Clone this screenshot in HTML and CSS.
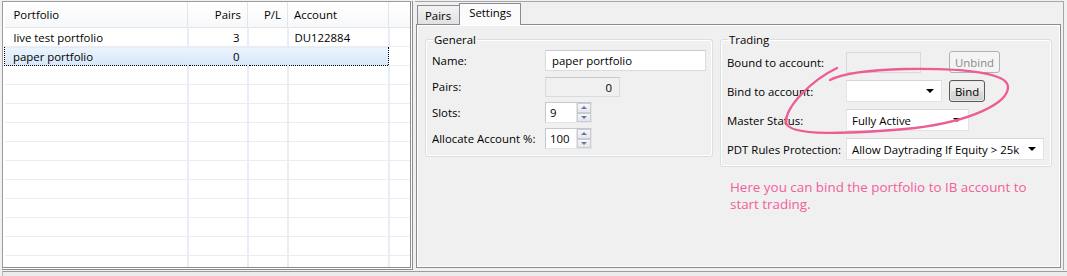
FILE: index.html
```html
<!DOCTYPE html>
<html lang="en">
<head>
    <meta charset="UTF-8">
    <title>Portfolio Settings</title>
    <link rel="stylesheet" href="styles.css">
</head>
<body>
    <div class="window">
        <div class="main">
            <div class="list-pane">
                <table class="grid">
                    <colgroup>
                        <col class="c-name"><col class="c-pairs"><col class="c-pl"><col class="c-acct"><col>
                    </colgroup>
                    <thead>
                        <tr><th class="left">Portfolio</th><th class="num">Pairs</th><th class="num">P/L</th><th class="left">Account</th><th></th></tr>
                    </thead>
                    <tbody>
                        <tr><td>live test portfolio</td><td class="num">3</td><td></td><td>DU122884</td><td></td></tr>
                        <tr class="selected"><td>paper portfolio</td><td class="num">0</td><td></td><td></td><td class="blank"></td></tr>
                        <tr><td></td><td></td><td></td><td></td><td></td></tr>
                        <tr><td></td><td></td><td></td><td></td><td></td></tr>
                        <tr><td></td><td></td><td></td><td></td><td></td></tr>
                        <tr><td></td><td></td><td></td><td></td><td></td></tr>
                        <tr><td></td><td></td><td></td><td></td><td></td></tr>
                        <tr><td></td><td></td><td></td><td></td><td></td></tr>
                        <tr><td></td><td></td><td></td><td></td><td></td></tr>
                        <tr><td></td><td></td><td></td><td></td><td></td></tr>
                        <tr><td></td><td></td><td></td><td></td><td></td></tr>
                        <tr><td></td><td></td><td></td><td></td><td></td></tr>
                        <tr><td></td><td></td><td></td><td></td><td></td></tr>
                    </tbody>
                </table>
            </div>
            <div class="tab-pane">
                <div class="tabs">
                    <div class="tab">Pairs</div>
                    <div class="tab active">Settings</div>
                </div>
                <div class="tab-body">
                    <fieldset class="group general">
                        <legend>General</legend>
                        <div class="form">
                            <label>Name:</label>
                            <div class="textbox wide">paper portfolio</div>
                            <label>Pairs:</label>
                            <div class="textbox readonly">0</div>
                            <label>Slots:</label>
                            <div class="spin"><span class="spin-val">9</span><span class="spin-btns"><i class="up"></i><i class="down"></i></span></div>
                            <label>Allocate Account %:</label>
                            <div class="spin"><span class="spin-val">100</span><span class="spin-btns"><i class="up"></i><i class="down"></i></span></div>
                        </div>
                    </fieldset>
                    <div class="trading-col">
                        <fieldset class="group trading">
                            <legend>Trading</legend>
                            <div class="form">
                                <label>Bound to account:</label>
                                <div class="line">
                                    <div class="textbox disabled"></div>
                                    <button class="btn disabled">Unbind</button>
                                </div>
                                <label>Bind to account:</label>
                                <div class="line">
                                    <div class="combo bind"><span></span><i class="arrow"></i></div>
                                    <button class="btn default">Bind</button>
                                </div>
                                <label>Master Status:</label>
                                <div class="combo status"><span>Fully Active</span><i class="arrow"></i></div>
                                <label>PDT Rules Protection:</label>
                                <div class="combo pdt"><span>Allow Daytrading If Equity &gt; 25k</span><i class="arrow"></i></div>
                            </div>
                        </fieldset>
                        <p class="note">Here you can bind the portfolio to IB account to start trading.</p>
                    </div>
                </div>
            </div>
        </div>
        <div class="statusbar"></div>
    </div>
    <svg class="scribble" width="1067" height="276" viewBox="0 0 1067 276">
        <path d="M837 68 C812 80 786 106 786 122 C787 137 850 134 915 128 C972 121 1008 103 1008 87 C1008 73 965 68 905 69 C862 70 842 74 830 80" fill="none" stroke="#ee5c95" stroke-width="2.4" stroke-linecap="round"/>
    </svg>
</body>
</html>
```

FILE: styles.css
```css
body { margin: 0; background: #f0f0f0; font-family: "Open Sans", "Noto Sans", sans-serif; font-size: 11.4px; color: #000; width: 1067px; height: 276px; overflow: hidden; position: relative; }

.window { display: flex; flex-direction: column; height: 276px; }
.main { display: flex; height: 270px; padding: 1px 0 0 2px; box-sizing: border-box; }

/* left list */
.list-pane { width: 411px; background: #fff; border: 1px solid #9c9c9c; border-right: 3px double #8c8c8c; border-bottom: 3px double #8c8c8c; box-sizing: border-box; overflow: hidden; }
.grid { border-collapse: collapse; table-layout: fixed; width: 406px; margin-left: 1px; }
.c-name { width: 183px; }
.c-pairs { width: 60px; }
.c-pl { width: 40px; }
.c-acct { width: 101px; }
.grid th { height: 24px; font-weight: normal; padding: 0 6px 1px 9px; background: linear-gradient(#ffffff, #f7f8fa); border-right: 1px solid #e3e5e8; border-bottom: 1px solid #e5e5e5; }
.grid th.left { text-align: left; }
.grid th.num { text-align: right; padding-right: 6px; }
.grid th:nth-child(4) { padding-left: 6px; }
.grid td { height: 18px; padding: 0 6px 0 9px; border-bottom: 1px solid #ededed; border-right: 2px solid #e8eef7; white-space: nowrap; }
.grid td:nth-child(4) { padding-left: 6px; }
.grid td:last-child, .grid th:last-child { border-right: none; }
.grid td.num { text-align: right; padding-right: 7px; }
.grid tr.selected td { background: linear-gradient(#ecf4fd, #d5e6f9); border-top: 1px dotted #000; border-bottom: 1px dotted #000; border-right-color: transparent; }
.grid tr.selected td:first-child { border-left: 1px dotted #000; padding-left: 8px; }
.grid tr.selected td:nth-child(4) { border-right: 1px dotted #000; }
.grid tr.selected td.blank { background: #fff; border: none; border-bottom: 1px solid #ededed; }

/* right tab pane */
.tab-pane { flex: 1; margin: 0 3px 0 2px; padding: 1px 0 0 1px; border-top: 1px solid #a6a6a6; border-right: 1px solid #a6a6a6; display: flex; flex-direction: column; }
.tabs { display: flex; align-items: flex-end; height: 21px; padding-left: 1px; }
.tab { height: 19px; padding: 0 8px 0 7px; border: 1px solid #898c95; border-bottom: none; background: linear-gradient(#f3f3f3, #e1e1e1); line-height: 20px; box-sizing: border-box; }
.tab.active { height: 22px; margin-left: -1px; padding: 0 9px; background: #fbfbfb; border-color: #898c95; line-height: 17px; position: relative; top: 1px; }
.tab-body { flex: 1; margin: 0 2px 2px 0; border: 1px solid #898c95; box-shadow: inset 0 0 0 1px #fff; display: flex; align-items: flex-start; gap: 7px; padding: 6px 0 0 8px; }

.group { margin: 0; border: 1px solid #d5dfe5; border-radius: 3px; padding: 2px 6px 6px 6px; box-shadow: inset 0 0 0 1px #fff; }
.group legend { padding: 0 1px; margin-left: 1px; line-height: 17px; }
.general { width: 288px; box-sizing: border-box; }
.trading { width: 332px; box-sizing: border-box; padding-bottom: 6px; }
.form { display: grid; align-items: center; }
.form label { white-space: nowrap; }
.general .form { grid-template-columns: 113px 1fr; grid-auto-rows: 21px; row-gap: 5px; padding-bottom: 1px; }
.trading .form { grid-template-columns: 119px 1fr; grid-auto-rows: 22px; row-gap: 7px; padding-top: 1px; }
.line { display: flex; align-items: center; gap: 7px; height: 22px; }

.textbox { height: 21px; box-sizing: border-box; border: 1px solid #d9dcdf; border-top-color: #c7c9cc; background: #fff; padding: 0 6px; line-height: 19px; }
.textbox.wide { width: 161px; }
.textbox.readonly { width: 75px; height: 20px; background: #f0f0f0; text-align: right; padding-right: 7px; }
.textbox.disabled { width: 75px; height: 21px; background: #f0f0f0; border-color: #d9d9d9; margin-right: 21px; }

.spin { width: 47px; height: 21px; box-sizing: border-box; border: 1px solid #abadb3; border-color: #c6c8cc #e3e5e8 #e3e5e8 #c6c8cc; background: #fff; display: flex; }
.spin-val { flex: 1; padding-left: 4px; line-height: 19px; }
.spin-btns { width: 14px; display: flex; flex-direction: column; border-left: 1px solid #e5e5e5; }
.spin-btns i { flex: 1; display: flex; align-items: center; justify-content: center; border: 1px solid #c9cdd2; background: linear-gradient(#f6f6f6, #e4e6ea); }
.spin-btns i::before { content: ""; border-left: 3px solid transparent; border-right: 3px solid transparent; }
.spin-btns .up::before { border-bottom: 3px solid #6677a4; }
.spin-btns .down::before { border-top: 3px solid #6677a4; }

.combo { height: 22px; box-sizing: border-box; border: 1px solid #e3e3e3; border-top-color: #d6d6d6; background: #fff; display: flex; align-items: center; justify-content: space-between; padding: 0 7px 0 5px; white-space: nowrap; }
.combo .arrow { width: 0; height: 0; border-left: 4px solid transparent; border-right: 4px solid transparent; border-top: 4px solid #000; }
.combo.bind { width: 96px; }
.combo.status { width: 123px; }
.combo.pdt { width: 198px; }

.btn { font: inherit; height: 22px; padding: 0 5px; border-radius: 3px; border: 1px solid #707070; background: linear-gradient(#f2f2f2, #ebebeb 50%, #dddddd 51%, #cfcfcf); color: #000; }
.btn.default { border-color: #5a5a5a; box-shadow: inset 0 0 0 1px #e8e8e8; }
.btn.disabled { border-color: #adb2b5; background: #f4f4f4; color: #8a8a8a; height: 22px; padding: 0 5px; }

.trading-col { display: flex; flex-direction: column; }
.note { margin: 12px 0 0 10px; width: 300px; color: #f0609a; font-size: 13.4px; line-height: 17px; }

.statusbar { flex: 1; margin: 1px 0 0 2px; border-top: 1px solid #9c9c9c; border-left: 1px solid #b8b8b8; background: #ececec; }

.scribble { position: absolute; left: 0; top: 0; pointer-events: none; }
```
